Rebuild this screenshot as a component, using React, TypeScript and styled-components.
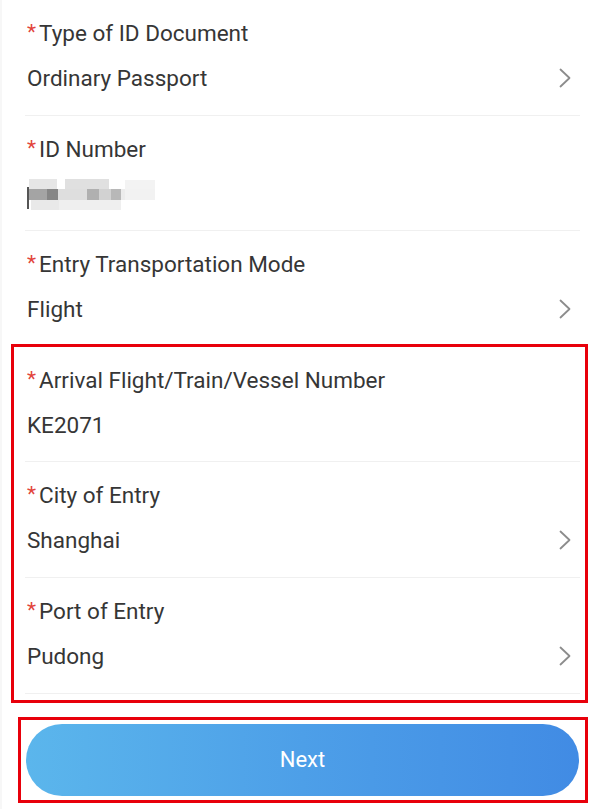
import { createGlobalStyle, styled } from "styled-components";

const GlobalStyle = createGlobalStyle`
  html, body {
    margin: 0;
    padding: 0;
    background: #ffffff;
  }
  body {
    font-family: Roboto, "Noto Sans", "Liberation Sans", sans-serif;
    color: #333333;
  }
`;

type Field = {
  label: string;
  value?: string;
  select?: boolean;
  masked?: boolean;
};

const topFields: Field[] = [
  { label: "Type of ID Document", value: "Ordinary Passport", select: true },
  { label: "ID Number", masked: true },
  { label: "Entry Transportation Mode", value: "Flight", select: true },
];

const arrivalFields: Field[] = [
  { label: "Arrival Flight/Train/Vessel Number", value: "KE2071" },
  { label: "City of Entry", value: "Shanghai", select: true },
  { label: "Port of Entry", value: "Pudong", select: true },
];

const Chevron = () => (
  <ChevronSvg viewBox="0 0 14 22" width="14" height="22">
    <polyline
      points="2.5,2.5 11.5,11 2.5,19.5"
      fill="none"
      stroke="#8c8c8c"
      strokeWidth="1.8"
      strokeLinecap="round"
      strokeLinejoin="round"
    />
  </ChevronSvg>
);

// pixelated ID number, as in the screenshot
const MaskedId = () => (
  <svg width="132" height="34" viewBox="0 0 132 34">
    <rect x="2" y="2" width="28" height="10" fill="#e6e6e6" />
    <rect x="38" y="2" width="44" height="10" fill="#e0e0e0" />
    <rect x="98" y="3" width="30" height="10" fill="#f3f3f3" />
    <rect x="2" y="12" width="18" height="11" fill="#a4a4a4" />
    <rect x="20" y="12" width="11" height="11" fill="#868686" />
    <rect x="31" y="12" width="29" height="11" fill="#dedede" />
    <rect x="60" y="12" width="12" height="11" fill="#b0b0b0" />
    <rect x="72" y="12" width="12" height="11" fill="#d2d2d2" />
    <rect x="84" y="12" width="10" height="11" fill="#b8b8b8" />
    <rect x="94" y="12" width="4" height="11" fill="#ececec" />
    <rect x="98" y="12" width="30" height="11" fill="#f2f2f2" />
    <rect x="4" y="23" width="28" height="10" fill="#e9e9e9" />
    <rect x="32" y="23" width="62" height="10" fill="#efefef" />
    <rect x="0" y="10" width="2" height="22" fill="#555555" />
  </svg>
);

const FieldRow = ({ field }: { field: Field }) => (
  <Row>
    <Label>
      <Star>*</Star>
      {field.label}
    </Label>
    <ValueLine>
      {field.masked ? <MaskedId /> : <Value>{field.value}</Value>}
      {field.select && <Chevron />}
    </ValueLine>
  </Row>
);

export default function App() {
  return (
    <Page>
      <GlobalStyle />
      <Form>
        {topFields.map((f) => (
          <FieldRow key={f.label} field={f} />
        ))}
        <Highlight>
          {arrivalFields.map((f) => (
            <FieldRow key={f.label} field={f} />
          ))}
        </Highlight>
      </Form>
      <ButtonArea>
        <NextButton type="button">Next</NextButton>
      </ButtonArea>
    </Page>
  );
}

const Page = styled.div`
  width: 600px;
  min-height: 809px;
  background: #ffffff;
  border-left: 2px solid #f7f7f7;
  box-sizing: border-box;
`;

const Form = styled.div`
  display: flex;
  flex-direction: column;
  padding: 0 20px 0 23px;
`;

const Highlight = styled.div`
  display: flex;
  flex-direction: column;
  margin: 0 -5px 0 -11px;
  padding: 0 5px 6px 11px;
  outline: 3px solid #e8000b;
`;

const Row = styled.div`
  display: flex;
  flex-direction: column;
  padding: 21px 0 24.6px 2px;
  border-bottom: 1px solid #f0f0f0;
`;

const Label = styled.div`
  display: flex;
  align-items: center;
  height: 24px;
  font-size: 22.5px;
  color: #363636;
  white-space: nowrap;
`;

const Star = styled.span`
  color: #e2453c;
  font-size: 21px;
  margin-right: 3px;
  position: relative;
  top: -1px;
`;

const ValueLine = styled.div`
  display: flex;
  align-items: center;
  justify-content: space-between;
  height: 24px;
  margin-top: 21px;
`;

const Value = styled.div`
  font-size: 22.5px;
  color: #363636;
`;

const ChevronSvg = styled.svg`
  margin-right: 8px;
  flex-shrink: 0;
`;

const ButtonArea = styled.div`
  display: flex;
  margin: 20px 15px 0 19px;
  padding: 4px 6px 4px 5px;
  outline: 3px solid #e8000b;
`;

const NextButton = styled.button`
  flex: 1;
  height: 72px;
  border: none;
  border-radius: 36px;
  background: linear-gradient(90deg, #5bb6ec 0%, #4d9fe8 50%, #418be4 100%);
  color: #ffffff;
  font-family: Roboto, "Noto Sans", "Liberation Sans", sans-serif;
  font-size: 22px;
  cursor: pointer;
`;
